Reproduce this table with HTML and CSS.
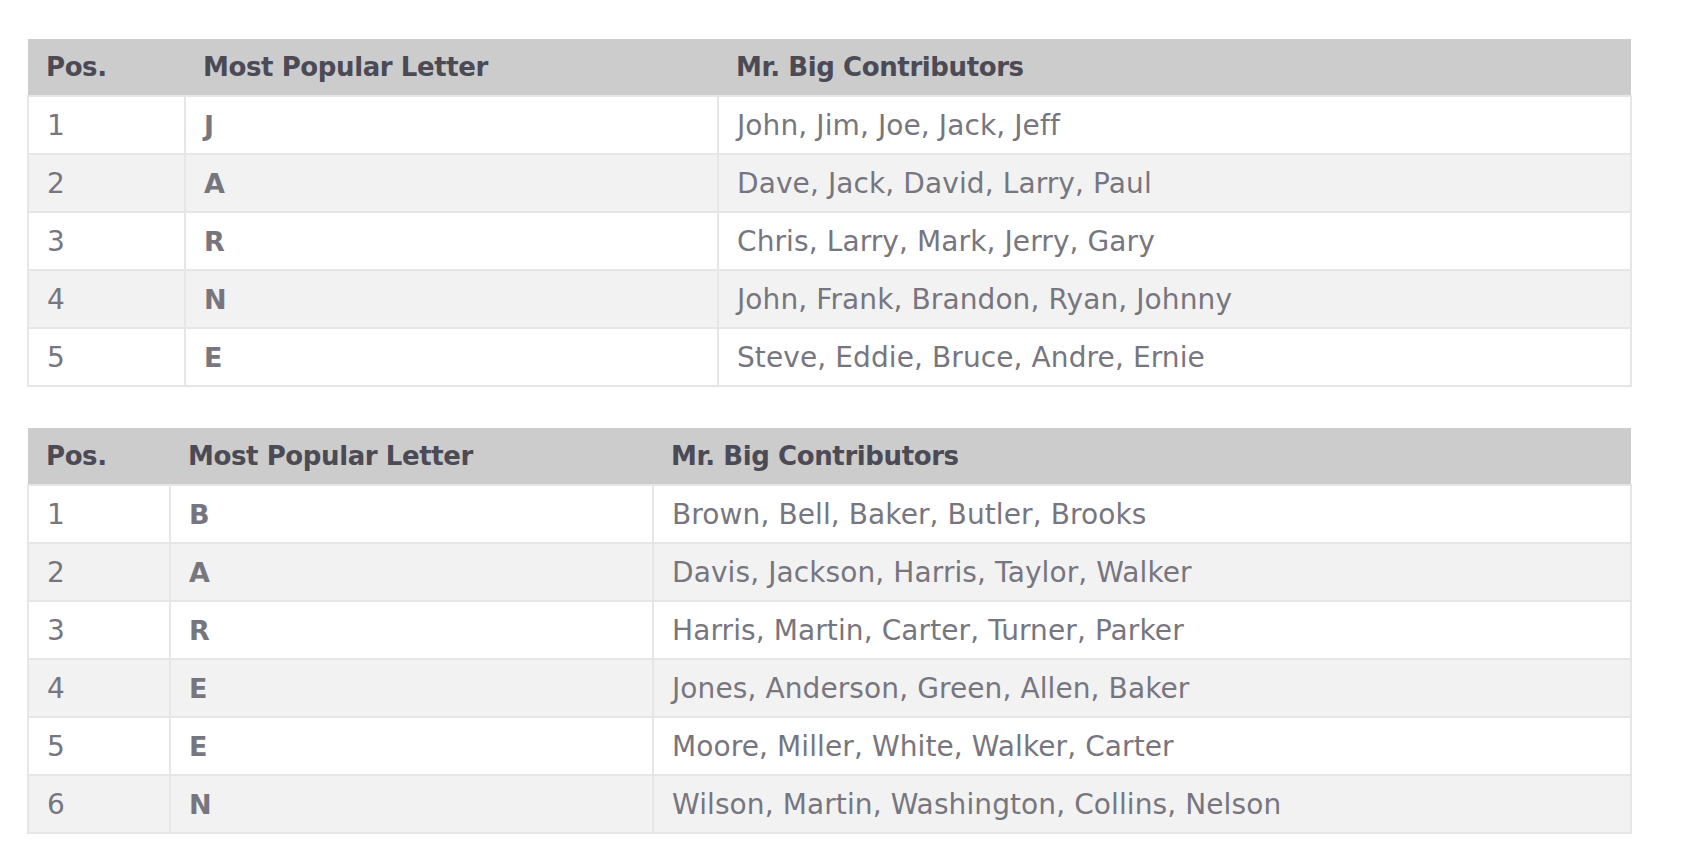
FILE: index.html
```html
<!DOCTYPE html>
<html>
<head>
<meta charset="utf-8">
<link rel="stylesheet" href="styles.css">
</head>
<body>
<div class="page">
  <table class="data t1">
    <colgroup><col class="c1"><col class="c2"><col class="c3"></colgroup>
    <thead>
      <tr><th>Pos.</th><th>Most Popular Letter</th><th>Mr. Big Contributors</th></tr>
    </thead>
    <tbody>
      <tr><td>1</td><td class="letter">J</td><td>John, Jim, Joe, Jack, Jeff</td></tr>
      <tr><td>2</td><td class="letter">A</td><td>Dave, Jack, David, Larry, Paul</td></tr>
      <tr><td>3</td><td class="letter">R</td><td>Chris, Larry, Mark, Jerry, Gary</td></tr>
      <tr><td>4</td><td class="letter">N</td><td>John, Frank, Brandon, Ryan, Johnny</td></tr>
      <tr><td>5</td><td class="letter">E</td><td>Steve, Eddie, Bruce, Andre, Ernie</td></tr>
    </tbody>
  </table>
  <table class="data t2">
    <colgroup><col class="c1"><col class="c2"><col class="c3"></colgroup>
    <thead>
      <tr><th>Pos.</th><th>Most Popular Letter</th><th>Mr. Big Contributors</th></tr>
    </thead>
    <tbody>
      <tr><td>1</td><td class="letter">B</td><td>Brown, Bell, Baker, Butler, Brooks</td></tr>
      <tr><td>2</td><td class="letter">A</td><td>Davis, Jackson, Harris, Taylor, Walker</td></tr>
      <tr><td>3</td><td class="letter">R</td><td>Harris, Martin, Carter, Turner, Parker</td></tr>
      <tr><td>4</td><td class="letter">E</td><td>Jones, Anderson, Green, Allen, Baker</td></tr>
      <tr><td>5</td><td class="letter">E</td><td>Moore, Miller, White, Walker, Carter</td></tr>
      <tr><td>6</td><td class="letter">N</td><td>Wilson, Martin, Washington, Collins, Nelson</td></tr>
    </tbody>
  </table>
</div>
</body>
</html>
```

FILE: styles.css
```css
html, body {
  margin: 0;
  padding: 0;
  background: #ffffff;
}
.page {
  padding: 39px 64px 0 27px;
  font-family: "DejaVu Sans", Verdana, sans-serif;
}
.data {
  width: 100%;
  border-collapse: collapse;
  table-layout: fixed;
  font-size: 28px;
  letter-spacing: 0.1px;
  color: #77767f;
}
.t1 { margin-bottom: 41px; }
.t1 .c1 { width: 157px; }
.t1 .c2 { width: 533px; }
.t2 .c1 { width: 142px; }
.t2 .c2 { width: 483px; }
.data th {
  background: #cccccc;
  color: #4b4a55;
  font-weight: bold;
  font-size: 26px;
  letter-spacing: -0.4px;
  text-align: left;
  height: 56px;
  padding: 0 18px;
  vertical-align: middle;
  border: none;
}
.data td {
  height: 56px;
  padding: 0 18px;
  border: 2px solid #e6e6e6;
  vertical-align: middle;
}
.data tbody tr:nth-child(even) td {
  background: #f2f2f2;
}
.data td.letter {
  font-weight: bold;
  font-size: 27px;
}
```
